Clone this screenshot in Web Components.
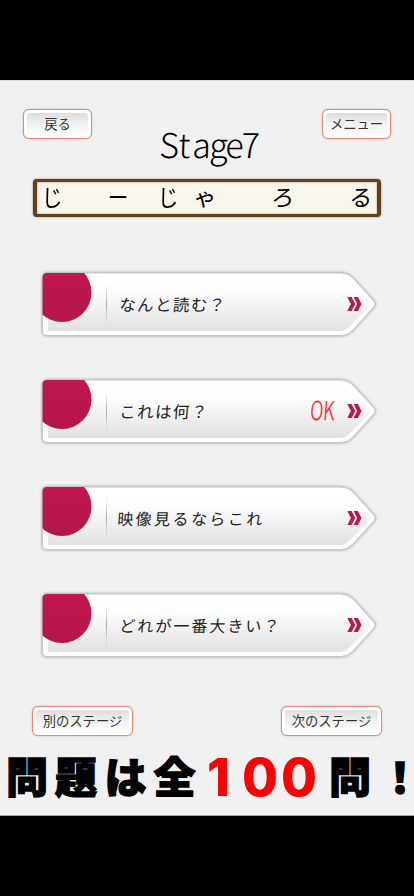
<!DOCTYPE html>
<html lang="ja"><head><meta charset="utf-8"><title>Stage7</title>
<style>
html,body{margin:0;background:#000}
body{width:414px;height:896px;overflow:hidden;font-family:"Noto Sans CJK JP",sans-serif;color:#111}
</style></head><body>
<quiz-app></quiz-app>
<script>
function define(name, html, init){
  customElements.define(name, class extends HTMLElement{
    constructor(){super();this.attachShadow({mode:'open'});}
    connectedCallback(){this.shadowRoot.innerHTML=html;if(init)init(this,this.shadowRoot);}
  });
}
/* Text set to an exact width, or glyph by glyph at the offsets in "xs" */
define('fit-text',`<style>:host{display:block}svg{display:block;overflow:visible}text{font-family:"Noto Sans CJK JP",sans-serif}</style><svg><text></text></svg>`,(h,r)=>{
  const s=r.querySelector('svg'),t=r.querySelector('text'),a=n=>h.getAttribute(n);
  s.setAttribute('width',a('w'));s.setAttribute('height',a('h'));
  t.textContent=a('text');t.setAttribute('y',a('base'));
  t.setAttribute('font-size',a('size'));t.setAttribute('font-weight',a('weight')||300);
  t.setAttribute('fill',a('color')||'#222');
  if(a('xs'))t.setAttribute('x',a('xs'));
  else{t.setAttribute('textLength',a('w'));t.setAttribute('lengthAdjust',a('adjust')||'spacingAndGlyphs');}
  if(a('font'))t.style.fontFamily=a('font');
  if(a('feature'))t.style.fontFeatureSettings='"'+a('feature')+'"';
  if(a('skew'))t.setAttribute('transform','skewX('+a('skew')+')');
  if(a('outline')){t.setAttribute('stroke',a('color'));t.setAttribute('stroke-width',a('outline'));}
});
define('soft-button',`<style>
:host{display:block;box-sizing:border-box;height:30px;border:1.4px solid #ee8873;border-radius:6px;background:#fff;padding:3px;box-shadow:0 0 1.5px #aaa}
div{height:100%;border-radius:3px;background:linear-gradient(#dedede,#f3f3f3 55%,#fcfcfc);display:flex;align-items:center;justify-content:center;font-size:13.3px;line-height:1;color:#333;white-space:nowrap}
</style><div><slot></slot></div>`);
define('answer-board',`<style>
:host{display:flex;box-sizing:border-box;width:348px;height:38px;border:solid #62431f;border-width:3px 4px;border-radius:4px;background:#f9f6ed;box-shadow:0 0 2px #777,inset 0 0 2px #9b8258;padding-left:3px}
span{width:24px;line-height:29px;font-size:23px;font-weight:400;text-align:center;color:#000;display:block;transform:skewX(-7deg)}
.b{margin-left:42px}.c{margin-left:26px}.d{margin-left:13px}.e,.f{margin-left:54px}.b{transform:scaleX(.9)}.a,.c{transform:scaleX(.9)}
</style><span class="a">じ</span><span class="b">ー</span><span class="c">じ</span><span class="d">ゃ</span><span class="e">ろ</span><span class="f">る</span>`);
define('question-row',`<style>
:host{display:grid;width:348px;height:75px}
svg,div{grid-area:1/1}svg{display:block}
.shape{filter:drop-shadow(0 0 1.5px #999)}
div{display:flex;align-items:flex-start}
</style><svg width="348" height="75" viewBox="0 0 348 75">
<defs><linearGradient id="g" x1="0" y1="0" x2="0" y2="1"><stop offset="0" stop-color="#fff"/><stop offset=".3" stop-color="#fdfdfd"/><stop offset="1" stop-color="#e2e2e2"/></linearGradient>
<linearGradient id="v" x1="0" y1="0" x2="0" y2="1"><stop offset="0" stop-color="#bbb" stop-opacity="0"/><stop offset=".5" stop-color="#aaa"/><stop offset="1" stop-color="#bbb" stop-opacity="0"/></linearGradient>
<linearGradient id="r" x1="0" y1="0" x2="0" y2="1"><stop stop-color="#c3174f"/><stop offset="1" stop-color="#b4164b"/></linearGradient>
<clipPath id="c"><path d="M14 6H309Q315 6 320 11L341 33Q345 37 341 41L320 63Q315 68.500 309 68.500H14Q9.500 68.500 9.500 64V10.500Q9.500 6 14 6Z"/></clipPath></defs>
<path class="shape" d="M14 6H308Q315 6 320 11L340 33Q344 37 340 41L320 63Q315 68.500 308 68.500H14Q9.500 68.500 9.500 64V10.500Q9.500 6 14 6Z" fill="#fff" stroke="#c7c7c7"/>
<path d="M15 7H307Q313 7 317 12L335 33Q339 37 335 41L317 59Q313 64 307 64H15Z" fill="url(#g)"/>
<circle cx="29" cy="25.500" r="29.500" fill="url(#r)" clip-path="url(#c)"/>
<rect x="73" y="16" width="1" height="43" fill="url(#v)"/>
<path d="M314.300 30h4.300l3.600 7-3.600 7h-4.300l3.600-7ZM320.600 30h4.300l3.600 7-3.600 7h-4.300l3.600-7Z" fill="#bd174f"/>
</svg><div><slot></slot></div>`);
define('quiz-app',`<style>
:host{display:flex;flex-direction:column;width:414px;height:896px;background:#000;padding-top:80px;box-sizing:border-box}
main{box-sizing:border-box;height:736px;background:#f1f1f1;border-top:1px solid #ddd;border-bottom:1px solid #aaa;display:flex;flex-direction:column}
header{display:flex;justify-content:space-between;padding:28px 23px 0;height:69px}
header fit-text{margin-top:20px}
answer-board{margin:1px 0 0 33px}
section{margin:50px 0 0 33px;display:grid;gap:32px}
nav{display:flex;justify-content:space-between;padding:0 32px 0 32px;margin-top:43px}
footer{display:flex;margin-top:17px;height:50px;padding-left:6px}
</style><main>
<header><soft-button style="width:69px">戻る</soft-button><fit-text text="Stage7" w="93" h="44" base="29" size="34" color="#000" xs="-1 18 32 49 65 81" skew="-2"></fit-text><soft-button style="width:69px">メニュー</soft-button></header>
<answer-board></answer-board>
<section>
<question-row><fit-text style="margin-left:89px" text="なんと読む？" w="106" h="75" base="44.500" size="16.500" weight="400" adjust="spacing" skew="-4"></fit-text></question-row>
<question-row><fit-text style="margin-left:89px" text="これは何？" w="88" h="75" base="44" size="16.500" weight="400" adjust="spacing" skew="-4"></fit-text><fit-text style="margin-left:103px" text="OK" w="24" h="75" base="46.500" size="26" color="#ff1414" skew="-4" outline=".3"></fit-text></question-row>
<question-row><fit-text style="margin-left:87px" text="映像見るならこれ" w="145" h="75" base="44" size="16" weight="400" adjust="spacing" skew="-4"></fit-text></question-row>
<question-row><fit-text style="margin-left:89px" text="どれが一番大きい？" w="160" h="75" base="44" size="16" weight="400" adjust="spacing" skew="-4"></fit-text></question-row>
</section>
<nav><soft-button style="width:101px">別のステージ</soft-button><soft-button style="width:101px">次のステージ</soft-button></nav>
<footer>
<fit-text text="問題は全" w="191" h="50" base="40" size="42" weight="900" color="#000" outline="1.3" xs="0 49 98.500 147.500"></fit-text>
<fit-text style="margin-left:9px" text="100" w="109" h="50" base="43" size="52" weight="800" color="red" font="Inter" xs="1 36 75"></fit-text>
<fit-text style="margin-left:14px" text="問！" w="80" h="50" base="40" size="42" weight="900" color="#000" outline="1.3" feature="halt" xs="0 60.500"></fit-text>
</footer></main>`);
</script></body></html>
